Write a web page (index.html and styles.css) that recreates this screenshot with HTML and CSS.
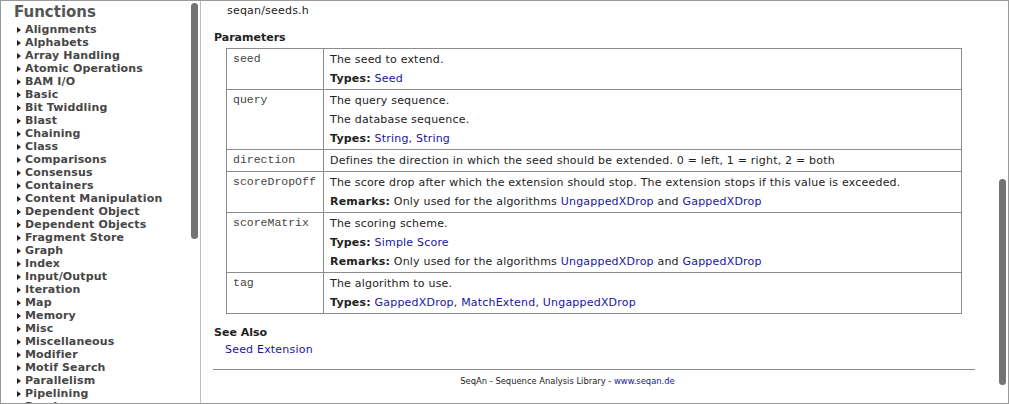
FILE: index.html
```html
<!DOCTYPE html>
<html>
<head>
<meta charset="utf-8">
<title>SeqAn - extendSeed</title>
<link rel="stylesheet" href="styles.css">
</head>
<body>
<div class="frame">
  <aside class="sidebar">
    <h2 class="side-title">Functions</h2>
    <ul class="side-list">
      <li>Alignments</li>
      <li>Alphabets</li>
      <li>Array Handling</li>
      <li>Atomic Operations</li>
      <li>BAM I/O</li>
      <li>Basic</li>
      <li>Bit Twiddling</li>
      <li>Blast</li>
      <li>Chaining</li>
      <li>Class</li>
      <li>Comparisons</li>
      <li>Consensus</li>
      <li>Containers</li>
      <li>Content Manipulation</li>
      <li>Dependent Object</li>
      <li>Dependent Objects</li>
      <li>Fragment Store</li>
      <li>Graph</li>
      <li>Index</li>
      <li>Input/Output</li>
      <li>Iteration</li>
      <li>Map</li>
      <li>Memory</li>
      <li>Misc</li>
      <li>Miscellaneous</li>
      <li>Modifier</li>
      <li>Motif Search</li>
      <li>Parallelism</li>
      <li>Pipelining</li>
      <li>Random</li>
    </ul>
    <div class="thumb thumb-left"></div>
  </aside>
  <main class="main">
    <div class="content">
      <div class="include">seqan/seeds.h</div>
      <h3 class="section">Parameters</h3>
      <table class="params">
        <tr>
          <td class="pname">seed</td>
          <td class="pdesc"><p>The seed to extend.</p><p><b>Types:</b> <a href="#">Seed</a></p></td>
        </tr>
        <tr>
          <td class="pname">query</td>
          <td class="pdesc"><p>The query sequence.</p><p>The database sequence.</p><p><b>Types:</b> <a href="#">String</a>, <a href="#">String</a></p></td>
        </tr>
        <tr>
          <td class="pname">direction</td>
          <td class="pdesc"><p>Defines the direction in which the seed should be extended. 0 = left, 1 = right, 2 = both</p></td>
        </tr>
        <tr>
          <td class="pname">scoreDropOff</td>
          <td class="pdesc"><p>The score drop after which the extension should stop. The extension stops if this value is exceeded.</p><p><b>Remarks:</b> Only used for the algorithms <a href="#">UngappedXDrop</a> and <a href="#">GappedXDrop</a></p></td>
        </tr>
        <tr>
          <td class="pname">scoreMatrix</td>
          <td class="pdesc"><p>The scoring scheme.</p><p><b>Types:</b> <a href="#">Simple Score</a></p><p><b>Remarks:</b> Only used for the algorithms <a href="#">UngappedXDrop</a> and <a href="#">GappedXDrop</a></p></td>
        </tr>
        <tr>
          <td class="pname">tag</td>
          <td class="pdesc"><p>The algorithm to use.</p><p><b>Types:</b> <a href="#">GappedXDrop</a>, <a href="#">MatchExtend</a>, <a href="#">UngappedXDrop</a></p></td>
        </tr>
      </table>
      <h3 class="section see-also">See Also</h3>
      <div class="see-link"><a href="#">Seed Extension</a></div>
      <hr class="rule">
      <div class="footer">SeqAn - Sequence Analysis Library - <a href="#">www.seqan.de</a></div>
    </div>
    <div class="thumb thumb-right"></div>
  </main>
</div>
</body>
</html>
```

FILE: styles.css
```css
html, body {
  margin: 0;
  padding: 0;
  background: #ffffff;
}

.frame {
  width: 1009px;
  height: 404px;
  box-sizing: border-box;
  border: 1px solid #9a9a9a;
  display: flex;
  overflow: hidden;
  font-family: "DejaVu Sans", Verdana, sans-serif;
  font-size: 11px;
  color: #222;
}

/* Sidebar */
.sidebar {
  width: 200px;
  flex: none;
  box-sizing: border-box;
  border-right: 1px solid #bdbdbd;
  position: relative;
  overflow: hidden;
  padding: 2px 0 0 13px;
}

.side-title {
  margin: 0 0 2px;
  font-size: 15px;
  line-height: 18px;
  font-weight: bold;
  color: #555;
}

.side-list {
  list-style: none;
  margin: 0;
  padding: 0 0 0 3px;
}

.side-list li {
  display: flex;
  align-items: center;
  gap: 4px;
  height: 13px;
  line-height: 13px;
  font-weight: bold;
  color: #464646;
  letter-spacing: 0.15px;
  white-space: nowrap;
}

.side-list li::before {
  content: "";
  width: 0;
  height: 0;
  border-left: 4px solid #222;
  border-top: 3px solid transparent;
  border-bottom: 3px solid transparent;
}

.thumb {
  position: absolute;
  width: 7px;
  border-radius: 4px;
  background: #737373;
}

.thumb-left {
  left: 190px;
  top: 2px;
  height: 236px;
}

.thumb-right {
  left: 798px;
  top: 178px;
  height: 206px;
}

/* Main */
.main {
  flex: 1;
  position: relative;
  overflow: hidden;
  letter-spacing: 0.2px;
}

.content {
  padding: 3px 33px 0 13px;
}

.include {
  padding-left: 13px;
  line-height: 14px;
  color: #222;
}

.section {
  margin: 13px 0 0;
  font-size: 11px;
  line-height: 14px;
  font-weight: bold;
  color: #222;
  letter-spacing: 0;
}

.params {
  margin: 3px 0 0 12px;
  width: 736px;
  border-collapse: collapse;
  border: 1px solid #8c8c8c;
}

.params td {
  border: 1px solid #8c8c8c;
  vertical-align: top;
  padding: 0 6px 2px;
}

.pname {
  width: 84px;
  font-family: "Liberation Mono", "DejaVu Sans Mono", monospace;
  font-size: 11.5px;
  color: #444;
  line-height: 14px;
  letter-spacing: 0;
  padding-top: 3px !important;
}

.pdesc p {
  margin: 0;
  padding: 4px 0 1px;
  line-height: 14px;
}

.pdesc b {
  color: #222;
}

a {
  color: #16169e;
  text-decoration: none;
}

.see-also {
  margin-top: 12px;
}

.see-link {
  margin-top: 3px;
  padding-left: 11px;
  line-height: 14px;
}

.rule {
  margin: 12px 0 0 -1px;
  border: 0;
  border-top: 1px solid #8c8c8c;
  height: 0;
}

.footer {
  margin-top: 5px;
  padding-right: 54px;
  text-align: center;
  font-family: "DejaVu Sans Condensed", "DejaVu Sans", sans-serif;
  font-size: 9.3px;
  letter-spacing: 0;
  line-height: 12px;
  color: #222;
}
```
